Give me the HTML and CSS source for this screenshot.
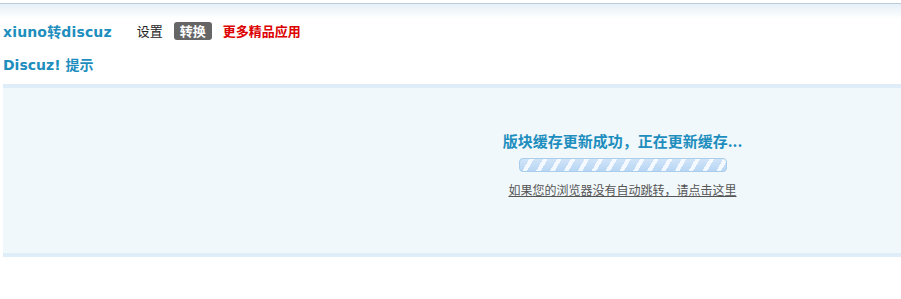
FILE: index.html
```html
<!DOCTYPE html>
<html lang="zh-CN">
<head>
    <meta charset="UTF-8">
    <title>Discuz! 提示</title>
    <link rel="stylesheet" href="styles.css">
</head>
<body>
    <div class="topline"></div>

    <div class="header">
        <h2 class="app-name">xiuno转discuz</h2>
        <ul class="tabs">
            <li><a href="#">设置</a></li>
            <li class="current"><a href="#">转换</a></li>
            <li class="more"><a href="#">更多精品应用</a></li>
        </ul>
    </div>

    <h3 class="page-title">Discuz! 提示</h3>

    <div class="infobox">
        <div class="inner">
            <h4 class="infotitle">版块缓存更新成功，正在更新缓存...</h4>
            <div class="progress"></div>
            <a class="jump" href="#">如果您的浏览器没有自动跳转，请点击这里</a>
        </div>
    </div>
</body>
</html>
```

FILE: styles.css
```css
* {
    margin: 0;
    padding: 0;
    box-sizing: border-box;
}

body {
    font-family: "DejaVu Sans", Verdana, "Noto Sans CJK SC", sans-serif;
    font-size: 12px;
    color: #333;
    background: #fff;
}

a {
    color: #333;
    text-decoration: none;
}

.topline {
    height: 16px;
    margin-top: 3px;
    border-top: 1px solid #bccbd6;
    background: linear-gradient(#e6f0f8, #fff);
}

.header {
    display: flex;
    align-items: center;
    padding-left: 3px;
    height: 20px;
    margin-top: 2px;
}

.app-name {
    font-size: 14px;
    font-weight: bold;
    color: #1d8ebe;
    letter-spacing: 0.15px;
}

.tabs {
    display: flex;
    align-items: center;
    list-style: none;
    margin-left: 25px;
}

.tabs li {
    margin-right: 11px;
}

.tabs a {
    display: block;
    font-family: "Noto Sans CJK SC", sans-serif;
    font-size: 13px;
    line-height: 18px;
    color: #222;
}

.tabs .current a {
    background: #666;
    color: #fff;
    font-weight: bold;
    padding: 0 6px;
    border-radius: 3px;
}

.tabs .more a {
    color: #d00;
    font-weight: bold;
}

.page-title {
    font-family: "DejaVu Sans", "Noto Sans CJK SC", sans-serif;
    font-size: 14px;
    font-weight: bold;
    color: #1d8ebe;
    padding-left: 3px;
    margin-top: 15px;
    line-height: 18px;
}

.infobox {
    margin: 10px 0 0 3px;
    height: 173px;
    border-top: 4px solid #deedf8;
    border-bottom: 4px solid #deedf8;
    background: #f1f8fb;
}

.inner {
    display: flex;
    flex-direction: column;
    align-items: center;
    padding: 43px 0 0 341px;
}

.infotitle {
    font-family: "Noto Sans CJK SC", sans-serif;
    font-size: 15px;
    font-weight: bold;
    color: #1d8ebe;
    line-height: 20px;
}

.progress {
    width: 208px;
    height: 14px;
    margin-top: 7px;
    border: 1px solid #a9cdea;
    border-radius: 4px;
    background-color: #c4ddf6;
    background-image:
        linear-gradient(rgba(255, 255, 255, 0.35), rgba(255, 255, 255, 0)),
        repeating-linear-gradient(120deg, #b8d6f4 0 8px, #f2f8ff 8px 12px);
}

.jump {
    margin-top: 10px;
    font-family: "Noto Sans CJK SC", sans-serif;
    font-size: 12px;
    color: #555;
    text-decoration: underline;
    line-height: 16px;
}
```
